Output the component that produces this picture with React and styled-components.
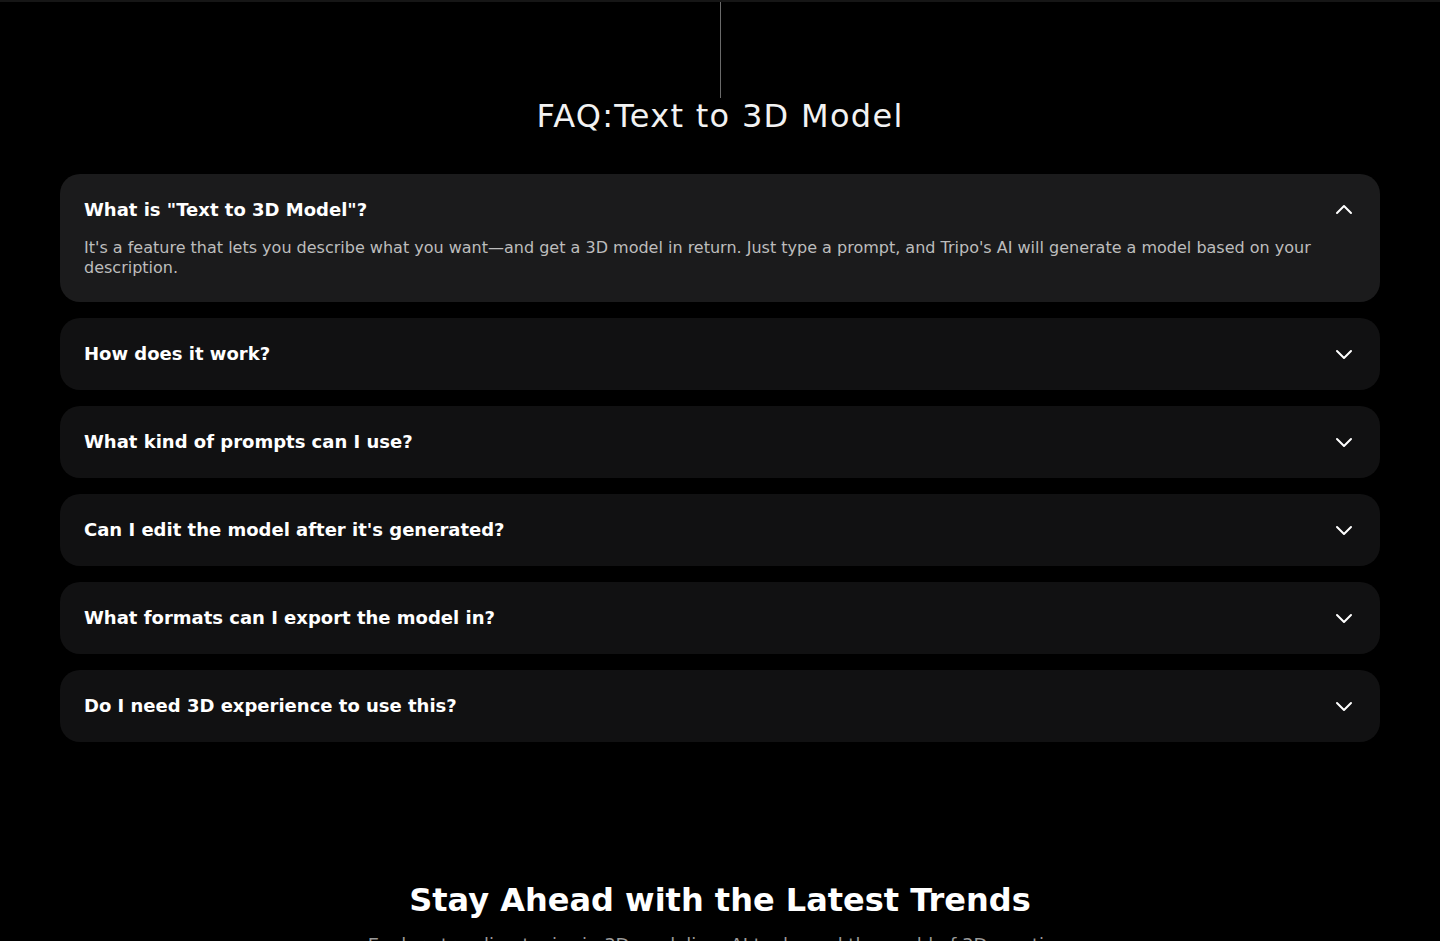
import { useState } from "react";
import styled, { createGlobalStyle } from "styled-components";

const GlobalStyle = createGlobalStyle`
  html, body {
    margin: 0;
    padding: 0;
    background: #000;
    color: #fff;
    font-family: "DejaVu Sans", sans-serif;
  }
`;

const faqs = [
  {
    q: 'What is "Text to 3D Model"?',
    a: "It's a feature that lets you describe what you want\u2014and get a 3D model in return. Just type a prompt, and Tripo's AI will generate a model based on your description.",
  },
  {
    q: "How does it work?",
    a: "Tripo's AI reads your prompt, interprets shapes, materials and style, then builds a textured 3D mesh in seconds.",
  },
  {
    q: "What kind of prompts can I use?",
    a: "Anything from simple objects to detailed characters. The more specific the description, the better the result.",
  },
  {
    q: "Can I edit the model after it's generated?",
    a: "Yes. You can refine, retexture or download the model and keep working in your favourite 3D tool.",
  },
  {
    q: "What formats can I export the model in?",
    a: "Models can be exported as GLB, FBX, OBJ, USDZ, STL and more.",
  },
  {
    q: "Do I need 3D experience to use this?",
    a: "Not at all. If you can describe it, you can create it.",
  },
];

function Chevron({ up }) {
  return (
    <svg width="24" height="24" viewBox="0 0 24 24" fill="none">
      <path
        d={up ? "M5 16l7-7 7 7" : "M5 10l7 7 7-7"}
        stroke="#fff"
        strokeWidth="2"
        strokeLinecap="round"
        strokeLinejoin="round"
      />
    </svg>
  );
}

export default function App() {
  const [open, setOpen] = useState(0);

  return (
    <Page>
      <GlobalStyle />
      <TopEdge />
      <FaqSection>
        <Divider />
        <Title>FAQ:Text to 3D Model</Title>
        <List>
          {faqs.map((item, i) => (
            <Card key={item.q} $open={open === i}>
              <Header onClick={() => setOpen(open === i ? -1 : i)}>
                <Question>{item.q}</Question>
                <Chevron up={open === i} />
              </Header>
              {open === i && <Answer>{item.a}</Answer>}
            </Card>
          ))}
        </List>
      </FaqSection>
      <Trends>
        <TrendsTitle>Stay Ahead with the Latest Trends</TrendsTitle>
        <TrendsText>
          Explore trending topics in 3D modeling, AI tools, and the world of 3D creation.
        </TrendsText>
      </Trends>
    </Page>
  );
}

const Page = styled.div`
  background: #000;
  min-height: 100vh;
  overflow: hidden;
`;

const TopEdge = styled.div`
  height: 2px;
  background: #161616;
`;

const FaqSection = styled.section`
  display: flex;
  flex-direction: column;
  align-items: center;
  padding: 0 60px;
`;

const Divider = styled.div`
  width: 1px;
  height: 96px;
  background: #6a6a6a;
`;

const Title = styled.h2`
  margin: -2px 0 0;
  font-size: 32px;
  font-weight: 400;
  line-height: 40px;
  letter-spacing: 1.3px;
  color: #f2f2f2;
`;

const List = styled.div`
  width: 100%;
  display: flex;
  flex-direction: column;
  gap: 16px;
  margin-top: 38px;
`;

const Card = styled.div`
  background: ${(p) => (p.$open ? "#1b1b1c" : "#111112")};
  border-radius: 20px;
  padding: 23px 24px 24px;
  min-height: 72px;
  box-sizing: border-box;
`;

const Header = styled.div`
  display: flex;
  align-items: center;
  justify-content: space-between;
  height: 24px;
  cursor: pointer;
`;

const Question = styled.h3`
  margin: 0;
  font-size: 18px;
  font-weight: 700;
  color: #fff;
`;

const Answer = styled.p`
  margin: 17px 0 0;
  font-size: 16px;
  line-height: 20px;
  color: #bdbdbd;
  padding-right: 40px;
`;

const Trends = styled.section`
  display: flex;
  flex-direction: column;
  align-items: center;
  margin-top: 138px;
`;

const TrendsTitle = styled.h2`
  margin: 0;
  font-size: 32px;
  font-weight: 700;
  line-height: 40px;
  color: #fff;
`;

const TrendsText = styled.p`
  margin: 12px 0 0;
  font-size: 18px;
  line-height: 26px;
  color: #9a9a9a;
`;
